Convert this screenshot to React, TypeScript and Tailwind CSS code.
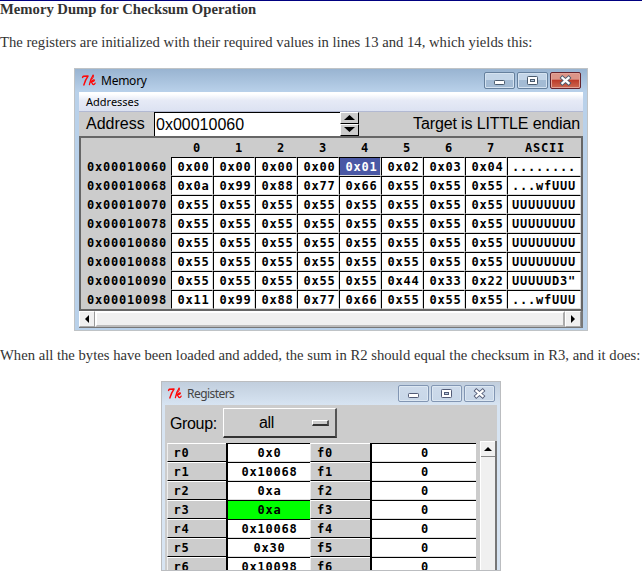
import React from "react";

const mono = "font-['DejaVu_Sans_Mono',monospace] font-bold text-[12px] tracking-[0.78px] text-black whitespace-pre";
const arial = "font-['Liberation_Sans',Arial,sans-serif] text-[16px] leading-[24px] text-black whitespace-nowrap";
const segoe = "font-['Noto_Sans','Open_Sans',sans-serif] whitespace-nowrap";
const serif = "font-['Liberation_Serif','Times_New_Roman',serif] text-[14.67px] leading-[17px] text-[#333] whitespace-nowrap";

const memory: [string, string[], string][] = [
  ["0x00010060", ["0x00", "0x00", "0x00", "0x00", "0x01", "0x02", "0x03", "0x04"], "........"],
  ["0x00010068", ["0x0a", "0x99", "0x88", "0x77", "0x66", "0x55", "0x55", "0x55"], "...wfUUU"],
  ["0x00010070", ["0x55", "0x55", "0x55", "0x55", "0x55", "0x55", "0x55", "0x55"], "UUUUUUUU"],
  ["0x00010078", ["0x55", "0x55", "0x55", "0x55", "0x55", "0x55", "0x55", "0x55"], "UUUUUUUU"],
  ["0x00010080", ["0x55", "0x55", "0x55", "0x55", "0x55", "0x55", "0x55", "0x55"], "UUUUUUUU"],
  ["0x00010088", ["0x55", "0x55", "0x55", "0x55", "0x55", "0x55", "0x55", "0x55"], "UUUUUUUU"],
  ["0x00010090", ["0x55", "0x55", "0x55", "0x55", "0x55", "0x44", "0x33", "0x22"], "UUUUUD3\""],
  ["0x00010098", ["0x11", "0x99", "0x88", "0x77", "0x66", "0x55", "0x55", "0x55"], "...wfUUU"],
];

const registers = ["0x0", "0x10068", "0xa", "0xa", "0x10068", "0x30", "0x10098"];

function TkLogo() {
  return (
    <svg width="15" height="13" viewBox="0 0 15 13" fill="none" stroke="#ff0808" strokeLinecap="round" strokeLinejoin="round">
      <path d="M1.6 3.4 L2.2 2.3 L7 2.1 C5 4.8 3.8 7.5 2.9 10.9" strokeWidth="1.5" />
      <path d="M12.2 1.2 C10.4 3.6 9 7 8.4 10.6" strokeWidth="1.3" />
      <path d="M12.2 1.2 C13.2 2.6 11.8 4.6 10.6 5.4" strokeWidth="1" />
      <path d="M9.6 8 C10.8 6 13.6 5.2 13.4 6.4 C13.2 7.6 11 7.8 10 8 C11.4 8.2 11 10.6 12.4 10.5 C13.4 10.4 13.8 9.8 14.1 9.2" strokeWidth="1.3" />
    </svg>
  );
}

function Glyph({ kind, stroke }: { kind: "min" | "max" | "close"; stroke: string }) {
  return (
    <svg width="29" height="15" viewBox="0 0 29 15" fill="none">
      {kind === "min" && <rect x="9.5" y="7.5" width="10" height="4" rx="0.8" fill="#fff" stroke={stroke} />}
      {kind === "max" && (
        <g stroke={stroke}>
          <rect x="9.5" y="3.5" width="10" height="8" rx="0.8" fill="#fff" />
          <rect x="12.5" y="6.5" width="4" height="2" fill="#b9cbe0" />
        </g>
      )}
      {kind === "close" && (
        <g strokeLinecap="square">
          <path d="M11.4 4.8 L17.6 10.2 M17.6 4.8 L11.4 10.2" stroke={stroke} strokeWidth="4" />
          <path d="M11.4 4.8 L17.6 10.2 M17.6 4.8 L11.4 10.2" stroke="#fff" strokeWidth="2.2" />
        </g>
      )}
    </svg>
  );
}

function TitleButtons({ active }: { active: boolean }) {
  const box = "w-[31px] h-[17px] rounded-[2px] border flex shrink-0";
  const plain = active
    ? " border-[#65809d] bg-linear-to-b from-[#c3d5e8] from-45% to-[#a3bbd4] to-50% shadow-[inset_0_0_0_1px_#d4e2f0]"
    : " border-[#8296b3] bg-linear-to-b from-[#cddaea] to-[#c8d7e8] shadow-[inset_0_0_0_1px_#dce7f2]";
  const red = " border-[#64232d] bg-linear-to-b from-[#dc9588] from-40% via-[#bd3c2a] via-50% to-[#cc6952] shadow-[inset_0_0_0_1px_#e3a397]";
  const stroke = active ? "#495a6d" : "#525b76";
  return (
    <div className="flex gap-[2px]">
      <div className={box + plain}><Glyph kind="min" stroke={stroke} /></div>
      <div className={box + plain}><Glyph kind="max" stroke={stroke} /></div>
      <div className={box + (active ? red : plain)}><Glyph kind="close" stroke={stroke} /></div>
    </div>
  );
}

function Arrow({ dir }: { dir: "left" | "right" | "up" }) {
  const d = { left: "M6 0 V8 L2 4 Z", right: "M2 0 V8 L6 4 Z", up: "M0 6 H8 L4 2 Z" }[dir];
  return <svg width="8" height="8" viewBox="0 0 8 8"><path d={d} fill="#000" /></svg>;
}

function MemoryWindow() {
  return (
    <section className="ml-[74px] w-[514px] h-[263px] border border-[#bfc3c6] bg-[#b9d1ea] flex flex-col">
      <header className="h-[23px] shrink-0 flex bg-linear-to-b from-[#99b4d1] to-[#b9d1ea] pl-[6px] pr-[6px]">
        <div className="pt-[5px] w-[20px]"><TkLogo /></div>
        <div className={segoe + " text-[12px] leading-[24px] tracking-[-0.25px] text-black grow"}>Memory</div>
        <div className="pt-[3px]"><TitleButtons active /></div>
      </header>
      <div className="mx-[4px] h-[235px] bg-[#ccc] flex flex-col">
        <nav className={segoe + " h-[20px] shrink-0 border-b border-[#b2b9d2] bg-linear-to-b from-white from-10% via-[#e6eaf6] via-45% to-[#dce2f2] text-[11px] leading-[19px] pl-[7px] text-black"}>Addresses</nav>
        <div className="h-[24px] shrink-0 flex">
          <div className={arial + " w-[75px] pl-[7px]"}>Address</div>
          <div className={arial + " w-[186px] border-t border-l border-black bg-white pl-[1px] leading-[23px]"}>0x00010060</div>
          <div className="w-[19px] flex flex-col">
            {["M4 8 L9.5 3 L15 8 Z", "M4 3 L9.5 8 L15 3 Z"].map((d) => (
              <div key={d} className="h-[12px] border-t border-l border-t-white border-l-white border-r border-b border-r-black border-b-black">
                <svg width="17" height="10" viewBox="1 1 17 10"><path d={d} fill="#000" /></svg>
              </div>
            ))}
          </div>
          <div className={arial + " grow text-right pr-[3px] tracking-[-0.13px]"}>Target is LITTLE endian</div>
        </div>
        <div className="h-[175px] shrink-0 border-2 border-[#666] bg-[#ccc]">
          <div className={mono + " flex h-[19px] leading-[20px] pl-[90px]"}>
            {["0", "1", "2", "3", "4", "5", "6", "7"].map((n) => (
              <div key={n} className="w-[42px] pl-[22px]">{n}</div>
            ))}
            <div className="pl-[18px]">ASCII</div>
          </div>
          {memory.map(([addr, bytes, ascii], r) => (
            <div key={addr} className={mono + " flex h-[19px] leading-[18px]"}>
              <div className="w-[90px] pl-[6px] leading-[20px]">{addr}</div>
              {bytes.map((b, c) => (
                <div
                  key={c}
                  className={
                    "w-[42px] border-t border-l border-r border-b border-t-black border-l-black border-r-[#ddd] border-b-[#ddd] pl-[5.5px] " +
                    (r === 0 && c === 4 ? "bg-[#4a58a5] text-white" : "bg-white")
                  }
                >
                  {b}
                </div>
              ))}
              <div className="w-[74px] border border-t-black border-l-black border-r-[#ddd] border-b-[#ddd] bg-white pl-[4px]">{ascii}</div>
            </div>
          ))}
        </div>
        <div className="h-[17px] shrink-0 flex bg-[#f0f0f0] border-b border-r-2 border-[#777]">
          <div className="w-[16px] border border-t-white border-l-white border-r-[#999] border-b-[#aaa] flex items-center justify-center"><Arrow dir="left" /></div>
          <div className="grow border-2 border-l-white border-t-white border-r-[#aaa] border-b-[#bbb]" />
          <div className="w-[16px] border border-t-white border-l-white border-r-[#999] border-b-[#aaa] flex items-center justify-center"><Arrow dir="right" /></div>
        </div>
      </div>
    </section>
  );
}

function RegistersWindow() {
  return (
    <section className="ml-[161px] w-[340px] h-[190px] border border-[#bbbdc0] bg-[#d7e4f2] flex flex-col overflow-hidden">
      <header className="h-[23px] shrink-0 flex bg-linear-to-b from-[#c1cedd] to-[#d7e4f2] pl-[5px] pr-[5px]">
        <div className="pt-[5px] w-[20px]"><TkLogo /></div>
        <div className={segoe + " text-[12px] leading-[24px] tracking-[-0.55px] text-[#444] grow"}>Registers</div>
        <div className="pt-[3px]"><TitleButtons active={false} /></div>
      </header>
      <div className="mx-[3px] h-[165px] shrink-0 bg-[#ccc] flex flex-col">
        <div className="h-[36px] shrink-0 flex pt-[3px]">
          <div className={arial + " w-[58px] pl-[5px] leading-[31px] tracking-[-0.35px]"}>Group:</div>
          <div className={arial + " w-[114px] h-[30px] border-t border-l border-b-2 border-r-2 border-t-white border-l-white border-b-[#333] border-r-[#555] pl-[35px] pr-[6px] leading-[30px] flex items-center"}>
            <span className="grow tracking-[-0.3px]">all</span>
            <span className="w-[17px] h-[6px] border-t border-l border-b-2 border-r-2 border-t-white border-l-white border-b-[#333] border-r-[#555]" />
          </div>
        </div>
        <div className="h-[129px] flex">
          <div className="w-[315px] pt-[2px] pl-[2px] overflow-hidden">
            {registers.map((v, i) => (
              <div key={i} className={mono + " flex h-[19px] leading-[19px]"}>
                <div className="w-[59px] border-t border-b border-t-white border-b-black border-l border-l-[#eee] pl-[5.5px]">{"r" + i}</div>
                <div className={"w-[84px] border-t border-l-2 border-black text-center pl-[1px] " + (i === 3 ? "bg-[#00ff00]" : "bg-white shadow-[inset_0_-1px_0_#ddd]")}>{v}</div>
                <div className="w-[60px] border-t border-b border-t-white border-b-black border-l border-l-[#eee] pl-[6px]">{"f" + i}</div>
                <div className="w-[106px] border-t border-l-2 border-black bg-white shadow-[inset_0_-1px_0_#ddd] text-center pl-[2px]">0</div>
              </div>
            ))}
          </div>
          <div className="w-[17px] bg-[#f0f0f0] border-l border-r-2 border-l-white border-r-[#777]">
            <div className="h-[16px] border-t border-b border-t-white border-b-[#888] flex items-center justify-center"><Arrow dir="up" /></div>
          </div>
        </div>
      </div>
    </section>
  );
}

export default function App() {
  return (
    <main className="w-[642px] h-[585px] bg-white border-t border-[#000080] overflow-hidden">
      <h1 className={serif + " h-[33px] font-bold"}>Memory Dump for Checksum Operation</h1>
      <p className={serif + " h-[34px]"}>The registers are initialized with their required values in lines 13 and 14, which yields this:</p>
      <MemoryWindow />
      <p className={serif + " mt-[16px] h-[34px]"}>When all the bytes have been loaded and added, the sum in R2 should equal the checksum in R3, and it does:</p>
      <RegistersWindow />
    </main>
  );
}
